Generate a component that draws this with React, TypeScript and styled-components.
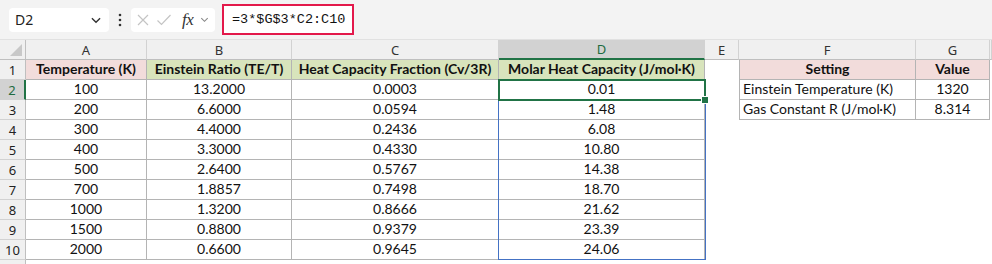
import styled, { createGlobalStyle } from "styled-components";

const GlobalStyle = createGlobalStyle`
  html, body {
    margin: 0;
    padding: 0;
    background: #ffffff;
  }
  body {
    width: 992px;
    height: 264px;
    overflow: hidden;
    font-family: Lato, "Liberation Sans", sans-serif;
  }
`;

const COLS = [26, 121, 145, 207, 206, 34, 177, 74];
const LETTERS = ["A", "B", "C", "D", "E", "F", "G"];

const Sheet = styled.div`
  width: 992px;
  height: 264px;
  overflow: hidden;
  display: flex;
  flex-direction: column;
  background: #fff;
`;

const Toolbar = styled.div`
  height: 40px;
  flex-shrink: 0;
  background: #f3f3f3;
  display: flex;
  align-items: center;
  padding-left: 9px;
  box-sizing: border-box;
  border-bottom: 1px solid #e1e1e1;
`;

const NameBox = styled.div`
  width: 100px;
  height: 24px;
  background: #fff;
  border-radius: 4px;
  box-sizing: border-box;
  display: flex;
  align-items: center;
  justify-content: space-between;
  padding: 0 6px 0 6px;
  font-family: "Noto Sans", "Open Sans", sans-serif;
  font-size: 14px;
  color: #222;
`;

const Dots = styled.div`
  width: 22px;
  display: flex;
  justify-content: center;
`;

const FnBox = styled.div`
  width: 84px;
  height: 24px;
  background: #fff;
  border-radius: 4px;
  display: flex;
  align-items: center;
  gap: 6px;
  padding-left: 5px;
  box-sizing: border-box;
`;

const Fx = styled.span`
  font-family: "Liberation Serif", serif;
  font-style: italic;
  font-size: 17px;
  color: #333;
  margin-left: 4px;
  letter-spacing: -0.5px;
`;

const FormulaBox = styled.div`
  margin-left: 7px;
  width: 132px;
  height: 31px;
  border: 2px solid #e3194b;
  box-sizing: border-box;
  background: #fff;
  display: flex;
  align-items: center;
  padding-left: 8px;
  font-family: "Liberation Mono", monospace;
  font-size: 13.5px;
  color: #111;
`;

const GridWrap = styled.div`
  position: relative;
  flex-shrink: 0;
`;

const Grid = styled.div`
  display: grid;
  grid-template-columns: ${COLS.map((c) => c + "px").join(" ")} 1fr;
  grid-auto-rows: 20px;
`;

const ColHead = styled.div<{ $sel?: boolean }>`
  background: ${({ $sel }) => ($sel ? "#d2d2d2" : "#f0f0f0")};
  color: ${({ $sel }) => ($sel ? "#1e6b3f" : "#333")};
  border-right: 1px solid #d2d2d2;
  border-bottom: ${({ $sel }) => ($sel ? "2px solid #217346" : "1px solid #bfbfbf")};
  box-sizing: border-box;
  display: flex;
  align-items: center;
  justify-content: center;
  font-family: "Noto Sans", "Open Sans", sans-serif;
  font-size: 13px;
`;

const Corner = styled.div`
  background: #f0f0f0;
  border-right: 1px solid #bfbfbf;
  border-bottom: 1px solid #bfbfbf;
  box-sizing: border-box;
  position: relative;
  &::after {
    content: "";
    position: absolute;
    right: 3px;
    bottom: 3px;
    border-style: solid;
    border-width: 0 0 12px 12px;
    border-color: transparent transparent #c8c8c8 transparent;
  }
`;

const RowHead = styled.div<{ $sel?: boolean }>`
  background: ${({ $sel }) => ($sel ? "#d2d2d2" : "#f0f0f0")};
  color: ${({ $sel }) => ($sel ? "#1e6b3f" : "#222")};
  border-right: ${({ $sel }) => ($sel ? "2px solid #217346" : "1px solid #bfbfbf")};
  border-bottom: 1px solid #d2d2d2;
  box-sizing: border-box;
  display: flex;
  align-items: center;
  justify-content: center;
  font-family: "Noto Sans", "Open Sans", sans-serif;
  font-size: 13px;
`;

const Cell = styled.div<{
  $fill?: string;
  $bold?: boolean;
  $lined?: boolean;
  $left?: boolean;
  $edge?: boolean;
}>`
  background: ${({ $fill }) => $fill || "#fff"};
  font-weight: ${({ $bold }) => ($bold ? 700 : 400)};
  font-size: 14px;
  color: #111;
  box-sizing: border-box;
  border-right: ${({ $lined }) => ($lined ? "1px solid #b4b4b4" : "none")};
  border-bottom: ${({ $lined }) => ($lined ? "1px solid #b4b4b4" : "none")};
  border-left: ${({ $edge }) => ($edge ? "1px solid #b4b4b4" : "none")};
  display: flex;
  align-items: flex-end;
  padding-bottom: 1px;
  justify-content: ${({ $left }) => ($left ? "flex-start" : "center")};
  padding-left: ${({ $left }) => ($left ? "3px" : "0")};
  white-space: nowrap;
  overflow: hidden;
  line-height: 18px;
`;

const ActiveCell = styled.div`
  position: absolute;
  left: ${26 + 121 + 145 + 207 - 1}px;
  top: 39px;
  width: 208px;
  height: 22px;
  border: 2px solid #217346;
  box-sizing: border-box;
  pointer-events: none;
  &::after {
    content: "";
    position: absolute;
    right: -5px;
    bottom: -5px;
    width: 6px;
    height: 6px;
    background: #217346;
    border: 1px solid #fff;
  }
`;

const RefRange = styled.div`
  position: absolute;
  left: ${26 + 121 + 145 + 207 - 1}px;
  top: 60px;
  width: 208px;
  height: 160px;
  border: 1px solid #4472c4;
  border-top: none;
  box-sizing: border-box;
  pointer-events: none;
`;

const pink = "#f2dcdb";
const green = "#d8e4bc";

const headers = [
  { t: "Temperature (K)", f: pink },
  { t: "Einstein Ratio (TE/T)", f: green },
  { t: "Heat Capacity Fraction (Cv/3R)", f: green },
  { t: "Molar Heat Capacity (J/mol·K)", f: green },
];

const rows = [
  ["100", "13.2000", "0.0003", "0.01"],
  ["200", "6.6000", "0.0594", "1.48"],
  ["300", "4.4000", "0.2436", "6.08"],
  ["400", "3.3000", "0.4330", "10.80"],
  ["500", "2.6400", "0.5767", "14.38"],
  ["700", "1.8857", "0.7498", "18.70"],
  ["1000", "1.3200", "0.8666", "21.62"],
  ["1500", "0.8800", "0.9379", "23.39"],
  ["2000", "0.6600", "0.9645", "24.06"],
];

const settings = [
  ["Einstein Temperature (K)", "1320"],
  ["Gas Constant R (J/mol·K)", "8.314"],
];

const Chevron = ({ size = 12, color = "#444" }: { size?: number; color?: string }) => (
  <svg width={size} height={size} viewBox="0 0 12 12">
    <path d="M2.5 4.5 L6 8 L9.5 4.5" fill="none" stroke={color} strokeWidth="1.2" />
  </svg>
);

const App = () => {
  const gridCells: JSX.Element[] = [];

  // header row
  gridCells.push(<Corner key="corner" />);
  LETTERS.forEach((l, i) =>
    gridCells.push(
      <ColHead key={"h" + l} $sel={i === 3}>
        {l}
      </ColHead>
    )
  );
  gridCells.push(<ColHead key="hrest" />);

  for (let r = 1; r <= 11; r++) {
    // row 11 is only a sliver at the bottom, its number is out of view
    gridCells.push(
      <RowHead key={"r" + r} $sel={r === 2}>
        {r <= 10 ? r : ""}
      </RowHead>
    );
    for (let c = 0; c < 4; c++) {
      if (r === 1) {
        gridCells.push(
          <Cell key={r + "-" + c} $fill={headers[c].f} $bold $lined>
            {headers[c].t}
          </Cell>
        );
      } else if (r <= 10) {
        gridCells.push(
          <Cell key={r + "-" + c} $lined>
            {rows[r - 2][c]}
          </Cell>
        );
      } else {
        gridCells.push(<Cell key={r + "-" + c} />);
      }
    }
    gridCells.push(<Cell key={r + "-e"} />);
    if (r === 1) {
      gridCells.push(
        <Cell key="f1" $fill={pink} $bold $lined $edge>
          Setting
        </Cell>
      );
      gridCells.push(
        <Cell key="g1" $fill={pink} $bold $lined>
          Value
        </Cell>
      );
    } else if (r <= 3) {
      gridCells.push(
        <Cell key={"f" + r} $lined $edge $left>
          {settings[r - 2][0]}
        </Cell>
      );
      gridCells.push(
        <Cell key={"g" + r} $lined>
          {settings[r - 2][1]}
        </Cell>
      );
    } else {
      gridCells.push(<Cell key={"f" + r} />);
      gridCells.push(<Cell key={"g" + r} />);
    }
    gridCells.push(<Cell key={r + "-rest"} />);
  }

  return (
    <>
      <GlobalStyle />
      <Sheet>
        <Toolbar>
          <NameBox>
            <span>D2</span>
            <Chevron size={14} color="#333" />
          </NameBox>
          <Dots>
            <svg width="4" height="14" viewBox="0 0 4 14">
              <circle cx="2" cy="2" r="1.3" fill="#333" />
              <circle cx="2" cy="7" r="1.3" fill="#333" />
              <circle cx="2" cy="12" r="1.3" fill="#333" />
            </svg>
          </Dots>
          <FnBox>
            <svg width="14" height="14" viewBox="0 0 14 14">
              <path d="M2 2 L12 12 M12 2 L2 12" stroke="#c4c4c4" strokeWidth="1.2" />
            </svg>
            <svg width="16" height="14" viewBox="0 0 16 14">
              <path d="M1.5 7.5 L5.5 11.5 L14.5 2" fill="none" stroke="#c4c4c4" strokeWidth="1.2" />
            </svg>
            <Fx>fx</Fx>
            <Chevron size={11} color="#888" />
          </FnBox>
          <FormulaBox>=3*$G$3*C2:C10</FormulaBox>
        </Toolbar>
        <GridWrap>
          <Grid>{gridCells}</Grid>
          <RefRange />
          <ActiveCell />
        </GridWrap>
      </Sheet>
    </>
  );
};

export default App;
